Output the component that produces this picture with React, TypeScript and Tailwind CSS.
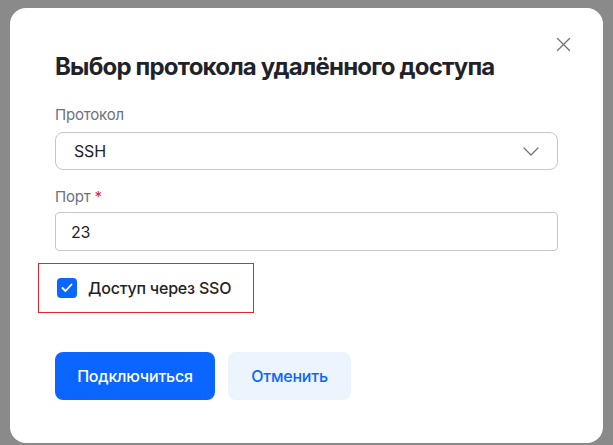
import React, { useState } from 'react';

const FONT = { fontFamily: 'Inter, "Noto Sans", sans-serif' };

const App: React.FC = () => {
  const [sso, setSso] = useState(true);
  const [port, setPort] = useState('23');

  return (
    <div className="min-h-screen bg-[#8a8a8a] pt-2 pl-[10px] tracking-[-0.2px]" style={FONT}>
      <div className="relative w-[593px] h-[435px] bg-white rounded-2xl px-[45px] pt-[43px]">
        <button className="absolute right-[31px] top-[27px] w-[18px] h-[18px] flex items-center justify-center text-[#6b7280]">
          <svg width="15" height="15" viewBox="0 0 15 15" fill="none" stroke="currentColor" strokeWidth="1.3" strokeLinecap="round">
            <path d="M1.5 1.5l12 12M13.5 1.5l-12 12" />
          </svg>
        </button>

        <h1 className="text-[24px] leading-8 font-bold text-[#1f2329] tracking-[-0.8px]">
          Выбор протокола удалённого доступа
        </h1>

        {/* Protocol */}
        <label className="block mt-[22px] text-[15px] leading-5 text-[#6b7280]">Протокол</label>
        <div className="mt-[7px] h-[38px] border border-[#c3c7cd] rounded-lg flex items-center pl-[18px] pr-[18px] text-[16px] text-[#1f2329]">
          <span className="flex-1">SSH</span>
          <svg width="16" height="9" viewBox="0 0 16 9" fill="none" stroke="#6b7280" strokeWidth="1.3" strokeLinecap="round" strokeLinejoin="round">
            <path d="M1 1l7 7 7-7" />
          </svg>
        </div>

        {/* Port */}
        <label className="block mt-[17px] text-[15px] leading-5 text-[#6b7280]">
          Порт <span className="text-[#e5262e]">*</span>
        </label>
        <input
          value={port}
          onChange={e => setPort(e.target.value)}
          className="mt-[5px] w-full h-[39px] border border-[#c3c7cd] rounded-[4px] px-[15px] text-[16px] text-[#1f2329] outline-none"
        />

        {/* SSO */}
        <div className="mt-[12px] -ml-[17px] w-[216px] h-[50px] border border-[#e5262e] flex items-center pl-[18px] gap-[11px]">
          <button
            onClick={() => setSso(!sso)}
            className={`w-5 h-5 rounded-[4px] flex items-center justify-center ${sso ? 'bg-[#0a66ff]' : 'border border-[#c3c7cd] bg-white'}`}
          >
            {sso && (
              <svg width="12" height="10" viewBox="0 0 12 10" fill="none" stroke="white" strokeWidth="1.8" strokeLinecap="round" strokeLinejoin="round">
                <path d="M1.5 5l3 3 6-6.5" />
              </svg>
            )}
          </button>
          <span className="text-[16px] font-medium text-[#1f2329]">Доступ через SSO</span>
        </div>

        {/* Actions */}
        <div className="mt-[39px] flex gap-[13px]">
          <button className="h-12 w-[160px] rounded-lg bg-[#0a66ff] text-white text-[16px] font-medium">
            Подключиться
          </button>
          <button className="h-12 w-[123px] rounded-lg bg-[#ecf4fe] text-[#0a66ff] text-[16px] font-medium">
            Отменить
          </button>
        </div>
      </div>
    </div>
  );
};

export default App;
